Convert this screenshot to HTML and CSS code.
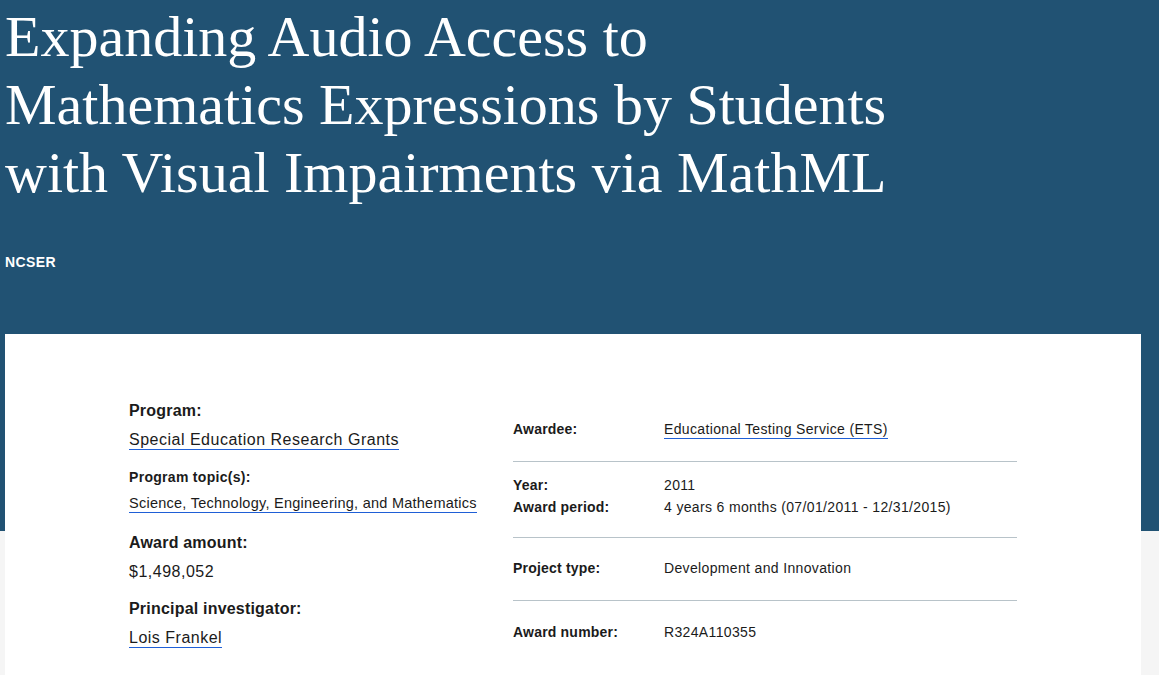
FILE: index.html
```html
<!DOCTYPE html>
<html lang="en">
<head>
<meta charset="utf-8">
<title>Expanding Audio Access to Mathematics Expressions</title>
<link rel="stylesheet" href="styles.css">
</head>
<body>
<header class="hero">
  <h1 class="hero-title">Expanding Audio Access to Mathematics Expressions by Students with Visual Impairments via MathML</h1>
  <p class="hero-center">NCSER</p>
</header>
<main class="card">
  <div class="card-grid">
    <div class="left-col">
      <div class="field">
        <div class="field-label">Program:</div>
        <div class="field-value first"><a href="#">Special Education Research Grants</a></div>
      </div>
      <div class="field field-topic">
        <div class="field-label small">Program topic(s):</div>
        <div class="field-value small"><a href="#">Science, Technology, Engineering, and Mathematics</a></div>
      </div>
      <div class="field field-amount">
        <div class="field-label">Award amount:</div>
        <div class="field-value">$1,498,052</div>
      </div>
      <div class="field">
        <div class="field-label">Principal investigator:</div>
        <div class="field-value"><a href="#">Lois Frankel</a></div>
      </div>
    </div>
    <div class="right-col">
      <div class="row row-first">
        <div class="pair"><span class="r-label">Awardee:</span><span class="r-value"><a href="#">Educational Testing Service (ETS)</a></span></div>
      </div>
      <div class="row row-tall">
        <div class="pair"><span class="r-label">Year:</span><span class="r-value">2011</span></div>
        <div class="pair"><span class="r-label">Award period:</span><span class="r-value">4 years 6 months (07/01/2011 - 12/31/2015)</span></div>
      </div>
      <div class="row">
        <div class="pair"><span class="r-label">Project type:</span><span class="r-value">Development and Innovation</span></div>
      </div>
      <div class="row">
        <div class="pair"><span class="r-label">Award number:</span><span class="r-value">R324A110355</span></div>
      </div>
    </div>
  </div>
</main>
</body>
</html>
```
FILE: styles.css
```css
* { box-sizing: border-box; }
html, body { margin: 0; padding: 0; }
body {
  background: #f5f5f5;
  font-family: "Liberation Sans", Arial, sans-serif;
  color: #1b1b1b;
}
a {
  color: #1b1b1b;
  text-decoration: none;
  border-bottom: 1px solid #1f5fd6;
  padding-bottom: 1px;
}
.hero {
  background: #215273;
  color: #fff;
  padding: 3px 5px 0 5px;
  height: 531px;
}
.hero-title {
  font-family: "Liberation Serif", "Times New Roman", serif;
  font-weight: 400;
  font-size: 58px;
  line-height: 68px;
  margin: 0;
  max-width: 930px;
}
.hero-center {
  font-weight: 700;
  font-size: 14px;
  letter-spacing: 0.4px;
  line-height: 20px;
  margin: 45px 0 0 0;
}
.card {
  background: #fff;
  margin: -197px 18px 0 5px;
  padding: 66px 124px 40px 124px;
}
.card-grid {
  display: grid;
  grid-template-columns: 360px 1fr;
  column-gap: 24px;
  align-items: start;
}
.field { margin-bottom: 15px; }
.field-topic { margin-bottom: 18px; }
.field-amount { margin-bottom: 15px; }
.field-label {
  font-weight: 700;
  font-size: 16px;
  letter-spacing: 0.2px;
  line-height: 22px;
  margin-bottom: 7px;
}
.field-label.small { font-size: 14px; letter-spacing: 0.3px; margin-bottom: 4px; }
.field-value {
  font-size: 16px;
  letter-spacing: 0.5px;
  line-height: 22px;
}
.field-value.first { margin-top: 6px; }
.field-value.small { font-size: 14.5px; letter-spacing: 0.25px; }
.row {
  border-bottom: 1px solid #b8c3c9;
  padding: 19px 0 21px;
}
.row-first { padding-top: 18px; }
.row:last-child { border-bottom: none; padding-top: 20px; }
.row-tall { padding: 12px 0 19px; }
.pair { display: flex; font-size: 14px; line-height: 22px; letter-spacing: 0.35px; }
.r-label { width: 151px; flex: none; font-weight: 700; letter-spacing: 0.2px; }
```
